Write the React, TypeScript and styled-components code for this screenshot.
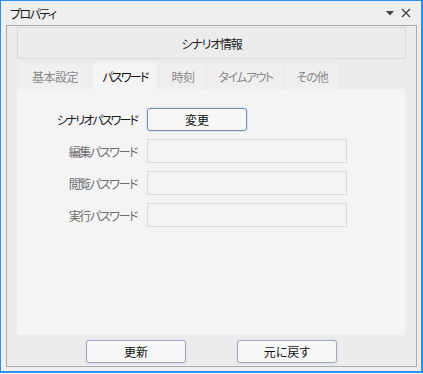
import React from "react";
import styled, { createGlobalStyle } from "styled-components";

const GlobalStyle = createGlobalStyle`
  html, body {
    margin: 0;
    padding: 0;
    background: #ffffff;
  }
  body {
    font-family: "Noto Sans CJK JP", "Noto Sans", sans-serif;
    font-size: 12px;
    font-feature-settings: "palt";
  }
`;

const Window = styled.div`
  box-sizing: border-box;
  width: 423px;
  height: 373px;
  border-style: solid;
  border-color: #2b8fef;
  border-width: 1px 2px 2px 1px;
  background: #eeeeee;
  display: flex;
  flex-direction: column;
`;

const TitleBar = styled.div`
  height: 24px;
  display: flex;
  align-items: center;
  padding: 0 10px 0 9px;
  color: #1a1a1a;
`;

const TitleText = styled.span`
  flex: 1;
  letter-spacing: -1.6px;
`;

const TitleIcons = styled.div`
  display: flex;
  align-items: center;
  gap: 7px;
`;

const Body = styled.div`
  flex: 1;
  display: flex;
  padding: 0 4px 4px 5px;
`;

const Frame = styled.div`
  flex: 1;
  box-sizing: border-box;
  border: 1px solid #ababab;
  background: #ececec;
  padding: 1px 10px 3px 10px;
  display: flex;
  flex-direction: column;
`;

const Header = styled.div`
  height: 30px;
  border: 1px solid #dadada;
  display: flex;
  align-items: center;
  justify-content: center;
  color: #222;
  letter-spacing: -1.2px;
`;

const TabRow = styled.div`
  display: flex;
  gap: 4px;
  padding-left: 4px;
  margin-top: 4px;
`;

const Tab = styled.div<{ $active?: boolean; $w: number; $ls?: number }>`
  box-sizing: border-box;
  width: ${(p) => p.$w}px;
  height: 26px;
  display: flex;
  align-items: center;
  justify-content: center;
  letter-spacing: ${(p) => p.$ls ?? -1.5}px;
  background: ${(p) => (p.$active ? "#f4f4f4" : "#efefef")};
  color: ${(p) => (p.$active ? "#111" : "#8a8a8a")};
`;

const Panel = styled.div`
  flex: 1;
  background: #f4f4f4;
  padding: 18px 0 0 0;
`;

const FormGrid = styled.div`
  display: grid;
  grid-template-columns: 120px 200px;
  column-gap: 10px;
  row-gap: 8px;
  grid-auto-rows: 24px;
`;

const Label = styled.div<{ $disabled?: boolean }>`
  display: flex;
  align-items: center;
  justify-content: flex-end;
  letter-spacing: ${(p) => (p.$disabled ? -1.4 : -1.9)}px;
  color: ${(p) => (p.$disabled ? "#6d6d6d" : "#1a1a1a")};
`;

const Button = styled.button<{ $focused?: boolean }>`
  box-sizing: border-box;
  width: 100px;
  height: 23px;
  align-self: center;
  border: 1px solid ${(p) => (p.$focused ? "#7a8ba3" : "#a6a6a6")};
  border-radius: 3px;
  background: #f7f7f7;
  box-shadow: 0 0 1px 1px #d6e6f7;
  font: inherit;
  color: #111;
  padding: 0;
`;

const TextBox = styled.div`
  box-sizing: border-box;
  width: 200px;
  height: 24px;
  border: 1px solid #dcdcdc;
  background: #f4f4f4;
`;

const Footer = styled.div`
  display: flex;
  justify-content: center;
  gap: 51px;
  padding-top: 5px;
`;

const ButtonCell = styled.div`
  display: flex;
  align-items: center;
`;

export default function App() {
  return (
    <>
      <GlobalStyle />
      <Window>
        <TitleBar>
          <TitleText>プロパティ</TitleText>
          <TitleIcons>
            <svg width="8" height="5" viewBox="0 0 8 5">
              <path d="M0 0 H8 L4 4.5 Z" fill="#444" />
            </svg>
            <svg width="10" height="10" viewBox="0 0 10 10">
              <path d="M1 1 L9 9 M9 1 L1 9" stroke="#444" strokeWidth="1.4" />
            </svg>
          </TitleIcons>
        </TitleBar>
        <Body>
          <Frame>
            <Header>シナリオ情報</Header>
            <TabRow>
              <Tab $w={68} $ls={-0.5}>基本設定</Tab>
              <Tab $w={64} $active $ls={-1.8}>パスワード</Tab>
              <Tab $w={44} $ls={-0.5}>時刻</Tab>
              <Tab $w={73}>タイムアウト</Tab>
              <Tab $w={52} $ls={-1}>その他</Tab>
            </TabRow>
            <Panel>
              <FormGrid>
                <Label>シナリオパスワード</Label>
                <ButtonCell>
                  <Button $focused>変更</Button>
                </ButtonCell>
                <Label $disabled>編集パスワード</Label>
                <TextBox />
                <Label $disabled>閲覧パスワード</Label>
                <TextBox />
                <Label $disabled>実行パスワード</Label>
                <TextBox />
              </FormGrid>
            </Panel>
            <Footer>
              <Button>更新</Button>
              <Button>元に戻す</Button>
            </Footer>
          </Frame>
        </Body>
      </Window>
    </>
  );
}
